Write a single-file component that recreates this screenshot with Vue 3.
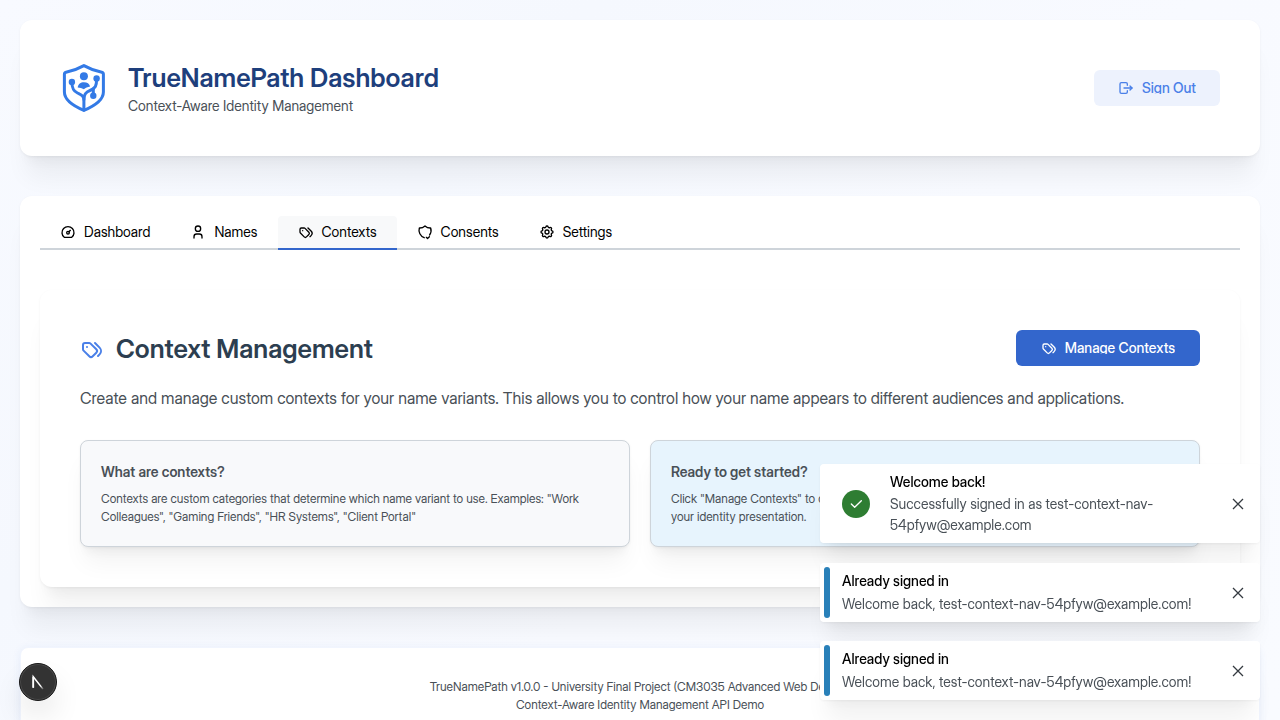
<script setup>
const icons = {
  dashboard: ['M12 13m-2 0a2 2 0 1 0 4 0a2 2 0 1 0 -4 0', 'M13.45 11.55l2.05 -2.05', 'M6.4 20a9 9 0 1 1 11.2 0z'],
  user: ['M8 7a4 4 0 1 0 8 0a4 4 0 0 0 -8 0', 'M6 21v-2a4 4 0 0 1 4 -4h4a4 4 0 0 1 4 4v2'],
  tags: [
    'M3 8v4.172a2 2 0 0 0 .586 1.414l5.71 5.71a2.41 2.41 0 0 0 3.408 0l3.592 -3.592a2.41 2.41 0 0 0 0 -3.408l-5.71 -5.71a2 2 0 0 0 -1.414 -.586h-4.172a2 2 0 0 0 -2 2z',
    'M18 19l1.592 -1.592a4.82 4.82 0 0 0 0 -6.816l-4.592 -4.592',
    'M7 10h-.01',
  ],
  shield: ['M10.8 20.6a12 12 0 0 1 -7.3 -14.6a12 12 0 0 0 8.5 -3a12 12 0 0 0 8.5 3a12 12 0 0 1 -1.6 10.5', 'M14 20l1.8 1.8l2.8 -2.8'],
  settings: [
    'M10.325 4.317c.426 -1.756 2.924 -1.756 3.35 0a1.724 1.724 0 0 0 2.573 1.066c1.543 -.94 3.31 .826 2.37 2.37a1.724 1.724 0 0 0 1.065 2.572c1.756 .426 1.756 2.924 0 3.35a1.724 1.724 0 0 0 -1.066 2.573c.94 1.543 -.826 3.31 -2.37 2.37a1.724 1.724 0 0 0 -2.572 1.065c-.426 1.756 -2.924 1.756 -3.35 0a1.724 1.724 0 0 0 -2.573 -1.066c-1.543 .94 -3.31 -.826 -2.37 -2.37a1.724 1.724 0 0 0 -1.065 -2.572c-1.756 -.426 -1.756 -2.924 0 -3.35a1.724 1.724 0 0 0 1.066 -2.573c-.94 -1.543 .826 -3.31 2.37 -2.37c1 .608 2.296 .07 2.572 -1.065z',
    'M9 12a3 3 0 1 0 6 0a3 3 0 0 0 -6 0',
  ],
  logout: ['M14 8v-2a2 2 0 0 0 -2 -2h-7a2 2 0 0 0 -2 2v12a2 2 0 0 0 2 2h7a2 2 0 0 0 2 -2v-2', 'M9 12h12l-3 -3', 'M18 15l3 -3'],
}
const tabs = [
  { label: 'Dashboard', icon: 'dashboard' },
  { label: 'Names', icon: 'user' },
  { label: 'Contexts', icon: 'tags', active: true },
  { label: 'Consents', icon: 'shield' },
  { label: 'Settings', icon: 'settings' },
]
const toasts = [
  { title: 'Welcome back!', text: 'Successfully signed in as test-context-nav-54pfyw@example.com', success: true },
  { title: 'Already signed in', text: 'Welcome back, test-context-nav-54pfyw@example.com!' },
  { title: 'Already signed in', text: 'Welcome back, test-context-nav-54pfyw@example.com!' },
]
</script>

<template>
  <div class="page">
    <header class="card header">
      <div class="brand">
        <svg class="logo" viewBox="0 0 48 48" fill="none" stroke="#337ae6" stroke-width="3" stroke-linejoin="round" stroke-linecap="round" aria-hidden="true">
          <path d="M23.9 1.6 C17.5 5.2 11.5 7.2 6 8.2 Q4.4 8.6 4.4 10.3 V28 C4.4 36.5 13 41.8 23.9 46.4 C34.8 41.8 43.4 36.5 43.4 28 V10.3 Q43.4 8.6 41.8 8.2 C36.3 7.2 30.3 5.2 23.9 1.6Z" />
          <path d="M23.9 46 V35.5 C23.9 31 20.3 30.3 17.5 29 C13.8 27.3 11.9 25 11.9 18" />
          <path d="M23.9 35.5 C23.9 29.5 26.5 27.8 30 26.5 C35.5 24.5 36.6 21.5 36.6 15.5" />
          <path d="M33.3 24.8 V31" />
          <g fill="#337ae6" stroke="none">
            <circle cx="23.9" cy="12.2" r="4" />
            <circle cx="11.9" cy="17.9" r="3.2" />
            <circle cx="36.6" cy="14.4" r="3.2" />
            <circle cx="33.3" cy="31.8" r="3.2" />
            <path d="M17.7 23.6 C18.2 19.7 20.6 18.2 23.9 18.2 C27.1 18.2 29.6 19.7 30.1 22.4 C27.4 23 25.6 23.7 23.9 25.2 C22 24.4 20 23.9 17.7 23.6Z" />
          </g>
        </svg>
        <div>
          <h1>TrueNamePath Dashboard</h1>
          <p class="tagline">Context-Aware Identity Management</p>
        </div>
      </div>
      <button type="button" class="btn light">
        <svg class="icon" viewBox="0 0 24 24" aria-hidden="true"><path v-for="d in icons.logout" :key="d" :d="d" /></svg>
        <span class="btn-label">Sign Out</span>
      </button>
    </header>

    <main class="card main">
      <div class="tabs" role="tablist">
        <button v-for="t in tabs" :key="t.label" type="button" role="tab" :aria-selected="!!t.active" :class="['tab', { active: t.active }]">
          <svg class="icon" viewBox="0 0 24 24" aria-hidden="true"><path v-for="d in icons[t.icon]" :key="d" :d="d" /></svg>
          <span>{{ t.label }}</span>
        </button>
      </div>

      <section class="panel">
        <div class="panel-head">
          <div class="panel-title">
            <svg class="icon large" viewBox="0 0 24 24" aria-hidden="true"><path v-for="d in icons.tags" :key="d" :d="d" /></svg>
            <h2>Context Management</h2>
          </div>
          <button type="button" class="btn filled">
            <svg class="icon" viewBox="0 0 24 24" aria-hidden="true"><path v-for="d in icons.tags" :key="d" :d="d" /></svg>
            <span class="btn-label">Manage Contexts</span>
          </button>
        </div>
        <p class="intro">Create and manage custom contexts for your name variants. This allows you to control how your name appears to different audiences and applications.</p>
        <div class="grid">
          <article class="info">
            <h3>What are contexts?</h3>
            <p>Contexts are custom categories that determine which name variant to use. Examples: "Work Colleagues", "Gaming Friends", "HR Systems", "Client Portal"</p>
          </article>
          <article class="info blue">
            <h3>Ready to get started?</h3>
            <p>Click "Manage Contexts" to create, edit, and organize your contexts and start to personalize all of your identity presentation.</p>
          </article>
        </div>
      </section>
    </main>

    <footer class="footer">
      <p>TrueNamePath v1.0.0 - University Final Project (CM3035 Advanced Web Design)</p>
      <p>Context-Aware Identity Management API Demo</p>
    </footer>

    <div class="toasts">
      <div v-for="(t, i) in toasts" :key="i" :class="['toast', { success: t.success }]" role="alert">
        <span v-if="t.success" class="toast-icon">
          <svg viewBox="0 0 24 24" aria-hidden="true"><path d="M5 12l5 5l10 -10" /></svg>
        </span>
        <span v-else class="bar"></span>
        <div class="toast-body">
          <div class="toast-title">{{ t.title }}</div>
          <div class="toast-text">{{ t.text }}</div>
        </div>
        <button type="button" class="close" aria-label="Close">
          <svg viewBox="0 0 16 16" aria-hidden="true"><path d="M3 3l10 10M13 3l-10 10" /></svg>
        </button>
      </div>
    </div>

    <button type="button" class="dev" aria-label="Open developer tools">
      <svg viewBox="0 0 38 38" fill="none" aria-hidden="true">
        <defs>
          <linearGradient id="diag" x1="20" y1="19" x2="25" y2="26" gradientUnits="userSpaceOnUse">
            <stop offset="0.5" stop-color="#fff" />
            <stop offset="1" stop-color="#fff" stop-opacity="0.2" />
          </linearGradient>
        </defs>
        <path d="M14 25V13.5L24.3 26.5" stroke="url(#diag)" stroke-width="1.6" />
        <path d="M14 25V13.5" stroke="#fff" stroke-width="1.8" />
      </svg>
    </button>
  </div>
</template>

<style>
html {
  height: 100%;
  overflow: hidden;
}
body {
  height: 100%;
  overflow: hidden;
  background: #f8faff;
}
</style>

<style scoped>
* {
  box-sizing: border-box;
}
.page {
  padding: 20px;
  height: 100vh;
  overflow: hidden;
  font-family: "Inter Display", Inter, "Liberation Sans", sans-serif;
  font-size: 14px;
  color: #495057;
  background: linear-gradient(135deg, #f8faff 0%, #f5f8fe 30%, #f8faff 60%, #f9fbff 100%);
}
h1,
h2,
h3,
p {
  margin: 0;
}
button {
  font-family: inherit;
  cursor: pointer;
}
.card {
  background: #fff;
  border-radius: 12px;
  box-shadow: 0 1px 3px rgba(0, 0, 0, 0.05), 0 28px 23px -7px rgba(0, 0, 0, 0.05), 0 12px 12px -7px rgba(0, 0, 0, 0.04);
}
.header {
  display: flex;
  align-items: center;
  justify-content: space-between;
  padding: 40px;
  margin-bottom: 40px;
}
.brand {
  display: flex;
  align-items: center;
  gap: 20px;
}
.logo {
  width: 48px;
  height: 48px;
}
h1 {
  font-size: 26px;
  line-height: 35px;
  font-weight: 600;
  color: #1e3f7c;
}
.tagline {
  font-size: 14px;
  line-height: 21px;
}
.icon {
  width: 16px;
  height: 16px;
  flex: none;
  fill: none;
  stroke: currentColor;
  stroke-width: 2;
  stroke-linecap: round;
  stroke-linejoin: round;
}
.icon.large {
  width: 24px;
  height: 24px;
  color: #4a80e8;
}
.btn {
  display: flex;
  align-items: center;
  gap: 8px;
  height: 36px;
  padding: 0 24px;
  border: 0;
  border-radius: 6px;
  font-size: 14px;
  font-weight: 500;
}
.btn-label {
  line-height: 12px;
  overflow: hidden;
}
.light {
  background: #edf2fd;
  color: #4a80e8;
}
.filled {
  padding: 0 25px;
  background: #3366cc;
  color: #fff;
}
.main {
  padding: 20px;
  overflow: clip;
}
.tabs {
  display: flex;
  border-bottom: 2px solid #ced4da;
}
.tab {
  display: flex;
  align-items: center;
  gap: 8px;
  height: 34px;
  padding: 0 20px;
  margin-bottom: -2px;
  border: 0;
  border-bottom: 2px solid transparent;
  border-radius: 4px 4px 0 0;
  background: transparent;
  font-size: 14px;
  line-height: 14px;
  color: #000;
}
.tab.active {
  background: #f8f9fa;
  border-bottom-color: #3366cc;
}
.panel {
  margin-top: 40px;
  padding: 40px;
  border-radius: 12px;
  box-shadow: 0 1px 3px rgba(0, 0, 0, 0.05), 0 28px 23px -7px rgba(0, 0, 0, 0.05), 0 12px 12px -7px rgba(0, 0, 0, 0.04);
  background: #fff;
}
.panel-head {
  display: flex;
  align-items: flex-start;
  justify-content: space-between;
  margin-bottom: 18px;
}
.panel-title {
  display: flex;
  align-items: center;
  gap: 12px;
}
h2 {
  font-size: 26px;
  line-height: 38px;
  font-weight: 600;
  color: #2c3e50;
}
.intro {
  font-size: 16px;
  line-height: 25px;
  margin-bottom: 29px;
}
.grid {
  display: grid;
  grid-template-columns: 1fr 1fr;
  gap: 20px;
}
.info {
  padding: 20px;
  border: 1px solid #ced4da;
  border-radius: 8px;
  background: #f8f9fb;
  box-shadow: 0 1px 3px rgba(0, 0, 0, 0.05), 0 20px 25px -5px rgba(0, 0, 0, 0.05), 0 10px 10px -5px rgba(0, 0, 0, 0.04);
}
.info.blue {
  background: #e7f4fd;
}
h3 {
  font-size: 14px;
  line-height: 21px;
  font-weight: 600;
  margin-bottom: 8px;
}
.info p {
  font-size: 12px;
  line-height: 18px;
}
.footer {
  margin-top: 40px;
  padding: 30px 40px;
  border: 1px solid #f1f5fe;
  border-radius: 8px;
  background: #fff;
  box-shadow: 0 1px 8px rgba(51, 102, 204, 0.08);
  text-align: center;
  font-size: 12px;
  line-height: 18px;
}
.toasts {
  position: fixed;
  right: 20px;
  bottom: 20px;
  width: 440px;
  display: flex;
  flex-direction: column;
  gap: 19px;
}
.toast {
  display: flex;
  align-items: center;
  padding: 4px 8px 4px 4px;
  border-radius: 4px;
  background: #fff;
  box-shadow: 0 1px 3px rgba(0, 0, 0, 0.05), 0 28px 23px -7px rgba(0, 0, 0, 0.05), 0 12px 12px -7px rgba(0, 0, 0, 0.04);
}
.toast.success {
  padding-left: 22px;
  margin-bottom: 1px;
}
.bar {
  align-self: stretch;
  width: 6px;
  margin-right: 12px;
  border-radius: 4px;
  background: #2980b9;
}
.toast-icon {
  display: flex;
  align-items: center;
  justify-content: center;
  width: 28px;
  height: 28px;
  margin-right: 20px;
  border-radius: 50%;
  background: #2e7d32;
}
.toast-icon svg {
  width: 16px;
  height: 16px;
  fill: none;
  stroke: #fff;
  stroke-width: 2;
  stroke-linecap: round;
  stroke-linejoin: round;
}
.toast-body {
  flex: 1;
  min-width: 0;
  margin-right: 20px;
  padding: 4px 0;
}
.toast-title {
  font-weight: 500;
  line-height: 20px;
  margin-bottom: 2px;
  color: #000;
}
.success .toast-title {
  margin-bottom: 1px;
}
.toast-text {
  line-height: 21px;
}
.close {
  display: flex;
  align-items: center;
  justify-content: center;
  width: 28px;
  height: 28px;
  padding: 0;
  border: 0;
  background: transparent;
}
.close svg {
  width: 16px;
  height: 16px;
  stroke: #343a40;
  stroke-width: 1.3;
}
.dev {
  position: fixed;
  left: 19px;
  bottom: 19px;
  width: 38px;
  height: 38px;
  padding: 0;
  border: 1px solid #171717;
  border-radius: 50%;
  background: #333;
  box-shadow: inset 0 0 0 1px #4a4a4a, 0 16px 32px -8px rgba(0, 0, 0, 0.24);
}
.dev svg {
  display: block;
  width: 100%;
  height: 100%;
}
</style>
